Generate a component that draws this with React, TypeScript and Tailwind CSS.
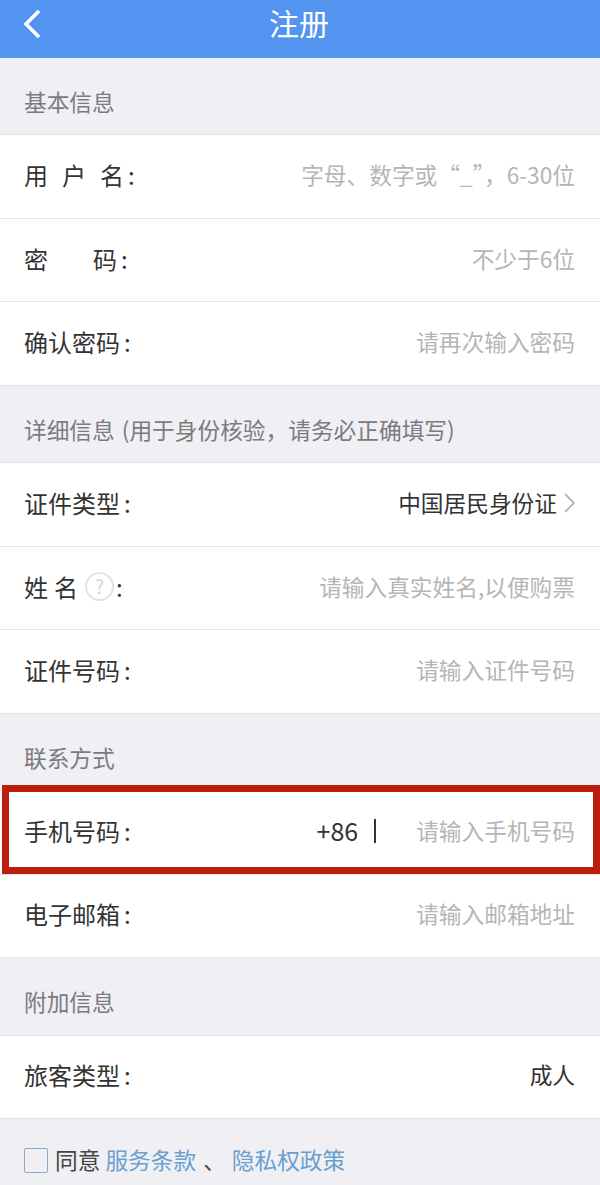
import React from 'react';

const font = "[font-family:'Noto_Sans_CJK_SC','Noto_Sans',sans-serif]";

const SectionTitle: React.FC<{ children: React.ReactNode }> = ({ children }) => (
  <div className="flex h-[77.4px] items-center border-b border-[#e3e3e6] bg-[#efeff4] px-6 pt-[12px] text-[22.7px] text-[#7b7b7f]">
    {children}
  </div>
);

const Row: React.FC<{ label: React.ReactNode; children: React.ReactNode }> = ({ label, children }) => (
  <div className="flex h-[83.5px] items-center justify-between border-b border-[#e3e3e6] bg-white pb-[3px] pl-6 pr-[25px]">
    <div className="flex items-center text-[24px] text-[#333333]">{label}</div>
    {children}
  </div>
);

const Hint: React.FC<{ children: React.ReactNode }> = ({ children }) => (
  <span className="text-[22.7px] text-[#b5b5b8]">{children}</span>
);

const Colon: React.FC = () => <span className="ml-[4px]">:</span>;

const App: React.FC = () => {
  return (
    <div className={`flex h-[1185px] w-[600px] flex-col overflow-hidden bg-[#efeff4] ${font}`}>
      <header className="relative flex h-[58px] shrink-0 items-center justify-center bg-[#5294ef] pb-[13px] pr-[2px] text-[30px] text-white">
        <svg className="absolute left-[20px] top-[8px] h-[32px] w-[24px]" viewBox="0 0 24 32" fill="none" stroke="currentColor" strokeWidth="3.6">
          <path d="M19 3 6 16l13 13" />
        </svg>
        注册
      </header>

      <SectionTitle>基本信息</SectionTitle>
      <Row label={<><span className="tracking-[14px]">用户</span>名<Colon /></>}>
        <Hint>字母、数字或“_”，6-30位</Hint>
      </Row>
      <Row label={<><span className="tracking-[45px]">密</span>码<Colon /></>}>
        <Hint>不少于6位</Hint>
      </Row>
      <Row label={<>确认密码<Colon /></>}>
        <Hint>请再次输入密码</Hint>
      </Row>

      <SectionTitle>
        <span>详细信息</span>
        <span className="ml-[7px]">(用于身份核验，请务必正确填写)</span>
      </SectionTitle>
      <Row label={<>证件类型<Colon /></>}>
        <div className="flex items-center gap-[7px]">
          <span className="text-[22.7px] text-[#333333]">中国居民身份证</span>
          <svg className="h-[20px] w-[11px] text-[#b5b5b8]" viewBox="0 0 11 20" fill="none" stroke="currentColor" strokeWidth="1.8">
            <path d="m1 1 9 9-9 9" />
          </svg>
        </div>
      </Row>
      <Row
        label={
          <>
            <span className="tracking-[6px]">姓名</span>
            <span className="ml-[1px] flex h-[29px] w-[29px] items-center justify-center rounded-full border-2 border-[#e3e3e3] text-[19px] text-[#d4d4d4]">?</span>
            <span className="ml-[2px]">:</span>
          </>
        }
      >
        <Hint>请输入真实姓名,以便购票</Hint>
      </Row>
      <Row label={<>证件号码<Colon /></>}>
        <Hint>请输入证件号码</Hint>
      </Row>

      <SectionTitle>联系方式</SectionTitle>
      <div className="relative">
        <Row label={<>手机号码<Colon /></>}>
          <div className="flex items-center">
            <span className="text-[25px] text-[#333333]">+86</span>
            <span className="ml-[16px] mr-[40px] h-[24px] w-[2px] bg-[#333333]" />
            <Hint>请输入手机号码</Hint>
          </div>
        </Row>
        <div className="pointer-events-none absolute left-[2px] right-0 top-[-6px] h-[89px] border-[7px] border-[#bb1e0a]" />
      </div>
      <Row label={<>电子邮箱<Colon /></>}>
        <Hint>请输入邮箱地址</Hint>
      </Row>

      <SectionTitle>附加信息</SectionTitle>
      <Row label={<>旅客类型<Colon /></>}>
        <span className="text-[22.7px] text-[#333333]">成人</span>
      </Row>

      <div className="flex items-center pl-6 pt-[24px] text-[22.7px]">
        <span className="h-[25px] w-[24px] rounded-[2px] border border-[#86a9cc]" />
        <span className="ml-[7px] text-[#444444]">同意</span>
        <span className="ml-[5px] text-[#6aa0d0]">服务条款</span>
        <span className="ml-[7px] text-[#444444]">、</span>
        <span className="ml-[6px] text-[#6aa0d0]">隐私权政策</span>
      </div>
    </div>
  );
};

export default App;
